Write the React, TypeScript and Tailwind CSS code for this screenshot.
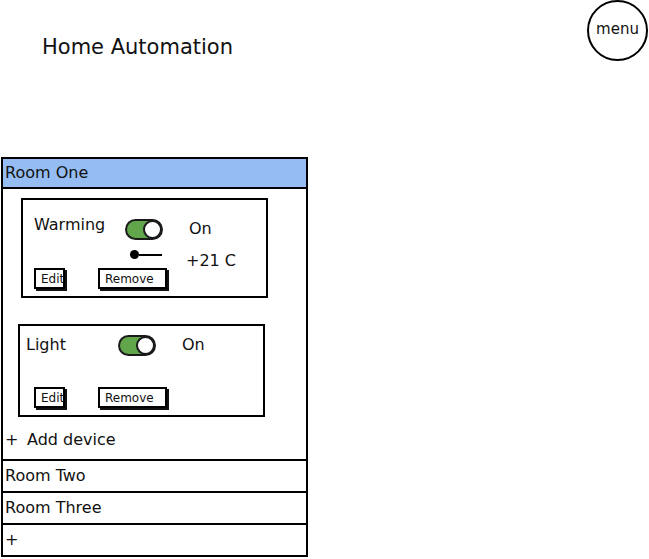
import React from 'react';

const Toggle: React.FC = () => (
    <div className="w-[38px] h-[21px] rounded-full bg-[#62a64c] border-2 border-[#1a1a1a] flex items-center justify-end">
        <div className="w-[19px] h-[19px] -mr-[1px] rounded-full bg-white border-2 border-[#1a1a1a]"></div>
    </div>
);

const Slider: React.FC = () => (
    <div className="flex items-center w-[32px] h-[9px]">
        <div className="w-[9px] h-[9px] rounded-full bg-black"></div>
        <div className="flex-1 h-[2px] bg-black"></div>
    </div>
);

const SmallButton: React.FC<{ label: string; width: string }> = ({ label, width }) => (
    <div className={`${width} h-[21px] border-2 border-black bg-white shadow-[2px_2px_0_#111] flex items-center pl-[5px] text-[12px] leading-none`}>
        {label}
    </div>
);

const RoomRow: React.FC<{ label: string }> = ({ label }) => (
    <div className="h-[32px] border-t-2 border-black flex items-center pl-[2px] text-[16px]">{label}</div>
);

export default function App() {
    return (
        <div className="w-[649px] h-[559px] bg-white text-[#111] overflow-hidden" style={{ fontFamily: '"DejaVu Sans", Verdana, sans-serif' }}>
            <header className="flex items-start h-[61px]">
                <h1 className="mt-[33px] ml-[42px] text-[21px] leading-[28px]">Home Automation</h1>
                <div className="ml-auto mr-[1px] w-[61px] h-[61px] rounded-full border-2 border-black flex items-center justify-center text-[15px] pb-[2px]">
                    menu
                </div>
            </header>

            <div className="mt-[96px] ml-[1px] w-[307px] border-2 border-black">
                <div className="h-[30px] bg-[#96bdf3] border-b-2 border-black flex items-center pl-[2px] text-[16px]">Room One</div>

                <div className="pt-[9px] pb-[7px]">
                    <div className="ml-[18px] w-[247px] border-2 border-black pt-[17px] pb-[6px]">
                        <div className="flex items-center h-[24px] pl-[11px]">
                            <span className="w-[91px] text-[16px] leading-[24px] pb-[8px]">Warming</span>
                            <Toggle />
                            <span className="ml-[26px] text-[16px] leading-[24px]">On</span>
                        </div>
                        <div className="flex items-start h-[21px] mt-[6px]">
                            <div className="ml-[107px] mt-[3px]">
                                <Slider />
                            </div>
                            <span className="ml-[24px] mt-[2px] text-[16px] leading-[24px]">+21 C</span>
                        </div>
                        <div className="flex items-start h-[22px] pl-[11px]">
                            <SmallButton label="Edit" width="w-[31px]" />
                            <div className="ml-[33px]">
                                <SmallButton label="Remove" width="w-[69px]" />
                            </div>
                        </div>
                    </div>

                    <div className="mt-[26px] ml-[15px] w-[247px] border-2 border-black pt-[7px] pb-[6px]">
                        <div className="flex items-center h-[24px] pl-[6px]">
                            <span className="w-[92px] text-[16px] leading-[24px]">Light</span>
                            <Toggle />
                            <span className="ml-[26px] text-[16px] leading-[24px]">On</span>
                        </div>
                        <div className="flex items-start h-[22px] pl-[14px] mt-[30px]">
                            <SmallButton label="Edit" width="w-[31px]" />
                            <div className="ml-[33px]">
                                <SmallButton label="Remove" width="w-[69px]" />
                            </div>
                        </div>
                    </div>

                    <div className="mt-[11px] h-[24px] flex items-center pl-[2px] text-[16px]">
                        <span className="w-[22px]">+</span>
                        <span>Add device</span>
                    </div>
                </div>

                <RoomRow label="Room Two" />
                <RoomRow label="Room Three" />
                <RoomRow label="+" />
            </div>
        </div>
    );
}
